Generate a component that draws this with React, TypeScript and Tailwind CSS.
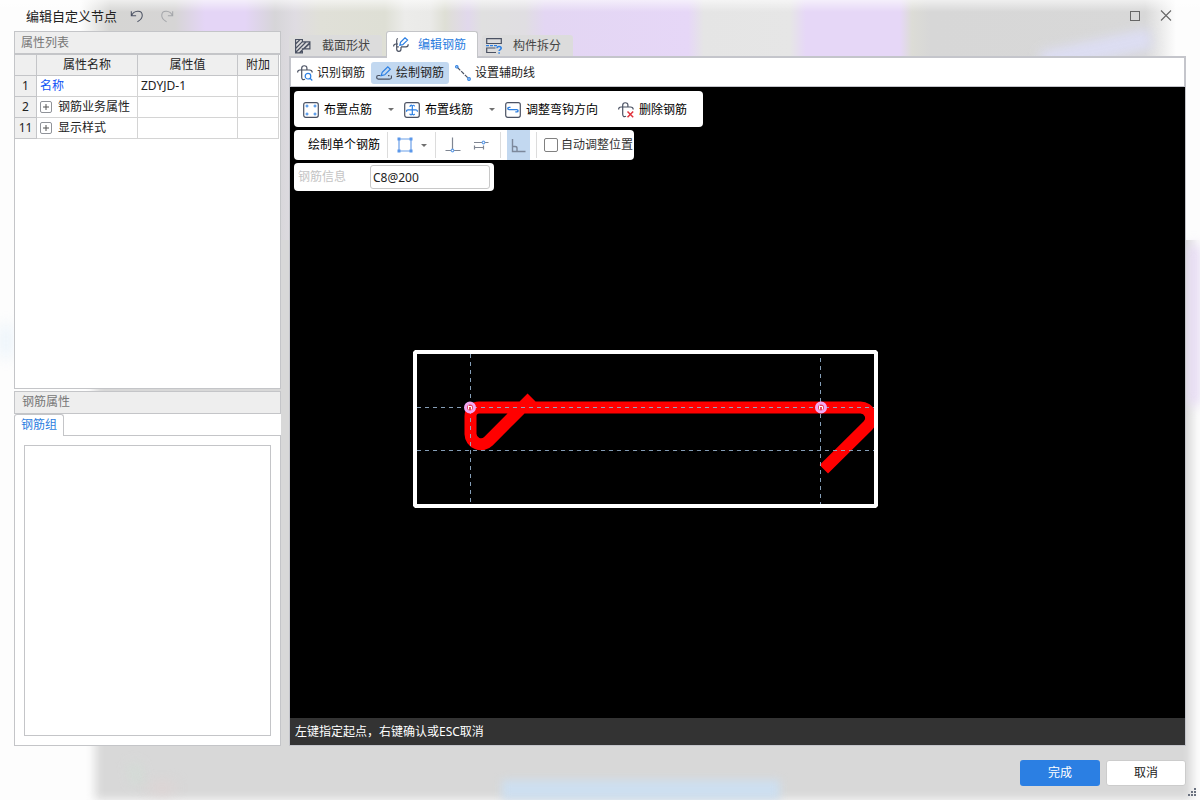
import React, { useState } from "react";

type IconProps = { children: React.ReactNode; className?: string };

function Icon({ children, className = "size-4" }: IconProps) {
  return (
    <svg
      viewBox="0 0 16 16"
      fill="none"
      stroke="#4b5263"
      strokeWidth="1.2"
      aria-hidden="true"
      className={`${className} shrink-0`}
    >
      {children}
    </svg>
  );
}

const BLUE = "#2b7fe3";

const UndoIcon = () => (
  <Icon className="size-[14px]">
    <path d="M1.500 2.500v5.200h5.500M1.800 7.500C4.500 1.500 13.500 0.800 14 7c0.200 3.500-2.500 6-5.500 7.500" />
  </Icon>
);

const RedoIcon = () => (
  <Icon className="size-[14px]">
    <path
      stroke="#a4a6aa"
      d="M14.500 2.500v5.200H9M14.200 7.500C11.500 1.500 2.500 0.800 2 7c-0.200 3.500 2.500 6 5.500 7.500"
    />
  </Icon>
);

const SectionIcon = () => (
  <Icon>
    <path d="M.6 1.500h6.800v2.300h7.500v7H7.400v4H.6zM.6 6l4.500-4.500M.6 10.500l6.800-6.800M.6 14.500L11 4M4.500 14.700L15 4.500M9 10.800l6-5.500" />
  </Icon>
);

const EditBarIcon = () => (
  <Icon>
    <path d="M.6 9.500C.6 7.800 1.400 7 3 7h2M5 1.500C3.700 1.500 3.700 2.500 3.700 3.500V12c0 3.200 4.300 3.200 4.300 0V10M8 9.800h5c1.500 0 2.200-.8 2.200-2.600M5.800 9.800H4" />
    <path stroke={BLUE} d="M6.800 8.300l.7-3L12 .8l2.500 2.300L9.800 7.600z" />
  </Icon>
);

const SplitIcon = () => (
  <Icon>
    <path d="M.7.700h14.600v4.800H.7zM10 14.500H.7V10h8.800" />
    <path stroke={BLUE} strokeDasharray="3 1" d="M0 7.600h11" />
    <path
      stroke={BLUE}
      strokeWidth="1.500"
      d="M11 10.200c0-2.400 4.200-2.400 4.200 0 0 1.400-2.100 1.400-2.100 2.900M13.100 14.200v1.500"
    />
  </Icon>
);

const BarPath = () => (
  <path d="M.6 7.400C.6 5.700 1.400 5 3 5h9.500c1.800 0 2.700.8 2.700 2.400M4.700 12.300V3.200c0-3.200 5.200-3.200 5.200-.2V5M4.700 12.300c0 2.600 2 2.900 3.300 1.800" />
);

const IdentifyIcon = () => (
  <Icon>
    <BarPath />
    <circle cx="11" cy="11.200" r="2.800" stroke={BLUE} />
    <path stroke={BLUE} d="M13 13.300l2.300 2.200" />
  </Icon>
);

const DrawIcon = () => (
  <Icon>
    <path d="M4.500 10.500H2.300c-2.200 0-2.200 3.600 0 3.600h11c2 0 2.500-1 2-3.600M12 10.700h1.500" />
    <path stroke={BLUE} d="M5.200 10.700l1-3.500L11.800 1.800l2.500 2.400-5.600 5.600z" />
  </Icon>
);

const GuideIcon = () => (
  <Icon>
    <path strokeDasharray="4 1.200" d="M2.500 2.500l11 11" />
    <circle cx="1.800" cy="1.800" r="1.200" fill="#fff" stroke={BLUE} />
    <circle cx="14" cy="14" r="1.300" fill="#fff" stroke={BLUE} />
  </Icon>
);

const PointBarIcon = () => (
  <Icon>
    <rect x=".7" y=".7" width="14.600" height="14.600" rx="2" />
    <g stroke={BLUE} strokeWidth="1">
      <circle cx="4" cy="4" r="1" />
      <circle cx="12" cy="4" r="1" />
      <circle cx="4" cy="12" r="1" />
      <circle cx="12" cy="12" r="1" />
    </g>
  </Icon>
);

const LineBarIcon = () => (
  <Icon>
    <rect x=".7" y=".7" width="14.600" height="14.600" rx="2" />
    <path
      stroke={BLUE}
      d="M2.500 9.800c0-1.500.5-2 1.500-2h8c1 0 1.500.5 1.500 2M6 5c0-2.400 2.300-2.400 2.300-.3v6.800M8.300 11c0 2.400-2.300 2.400-2.500.6M8.300 5c0-2.200 2-2.200 2.300-.6M8.300 11.300c0 1.900 2 1.900 2.300.5"
    />
  </Icon>
);

const HookIcon = () => (
  <Icon>
    <rect x=".7" y=".7" width="14.600" height="14.600" rx="2" />
    <path
      stroke={BLUE}
      strokeWidth="1.400"
      d="M5.500 5.400H4c-1.600 0-1.600 2.200 0 2.200h7.800c1.700 0 1.700 2.300 0 2.300h-1.500"
    />
  </Icon>
);

const DeleteBarIcon = () => (
  <Icon>
    <BarPath />
    <path stroke="#e0323c" strokeWidth="1.500" d="M9.500 9.500l5.700 5.700M15.200 9.500l-5.700 5.700" />
  </Icon>
);

const RectIcon = () => (
  <Icon>
    <path stroke="#6b9fe8" d="M2 2h12v12H2z" />
    <path fill="#5b97ea" stroke="none" d="M.5.500h3v3h-3zM12.500.500h3v3h-3zM.5 12.500h3v3h-3zM12.500 12.500h3v3h-3z" />
  </Icon>
);

const PerpendicularIcon = () => (
  <Icon>
    <path stroke="#7f8591" d="M7.500.5v12M.5 13.500H6M9 13.500h6.500" />
    <circle cx="7.500" cy="13.500" r="1.300" stroke="#6ba4ea" />
  </Icon>
);

const OffsetIcon = () => (
  <Icon>
    <path stroke="#7f8591" d="M1 5.500h8M12 5.500h3.500M1.500 10.500h9M1.500 8.500v4M10.500 8.500v4" />
    <circle cx="10.500" cy="5.500" r="1.300" stroke="#6ba4ea" />
  </Icon>
);

const RightAngleIcon = () => (
  <Icon>
    <path stroke="#7c889b" strokeWidth="1.400" d="M1.500 2v12.500h13M1.500 9.500h2.500c1.200 0 2 .7 2 1.700v3.300" />
  </Icon>
);

const Caret = () => (
  <svg viewBox="0 0 6 3" aria-hidden="true" className="h-[3px] w-[6px]">
    <path d="M0 0h6L3 3z" fill="#707070" />
  </svg>
);

function Backdrop() {
  return (
    <div aria-hidden="true" className="absolute inset-0 -z-10 overflow-hidden bg-[#fdfdfd]">
      <div className="absolute inset-y-0 right-2 left-[95px] bg-[#d8d8d8] blur-[5px]" />
      <div className="absolute inset-x-0 top-0 h-60 bg-[linear-gradient(90deg,#fdfdfd_80px,#d5d5d3_110px,#d6d5d5_175px,#e4d5f6_205px,#e4d5f6_245px,#d6d5d8_275px,#dfdce2_295px,#e0e0d8_320px,#dedfd5_385px,#ececea_405px,#eaeae8_430px,#dedfd5_445px,#e1d8ec_468px,#e0e0e0_482px,#e0dee2_525px,#e3d6f3_545px,#e6d7f7_688px,#e5e5e5_704px,#e6e6e6_790px,#e6d7f7_806px,#e6d7f7_900px,#dcdcd6_912px,#d7d7d7_930px,#d8d8d8_1145px,#fdfdfd_1176px)]" />
      <div className="absolute top-10 right-12 h-5 w-28 -rotate-12 bg-[#dddef4] blur-[6px]" />
      <div className="absolute inset-x-0 top-0 h-3 bg-linear-to-b from-white/60 to-transparent" />
      <div className="absolute top-[245px] right-0 h-40 w-3 bg-[#e6d9f5] blur-[6px]" />
      <div className="absolute top-[325px] left-0 h-8 w-3 bg-[#e9f3fb] blur-[7px]" />
      <div className="absolute bottom-0 left-[502px] h-5 w-[278px] bg-[#cddff0] blur-[4px]" />
      <div className="absolute bottom-4 left-[130px] h-5 w-3 -rotate-12 bg-[#d3dcd6] blur-[6px]" />
      <div className="absolute bottom-2 left-[150px] h-2 w-6 bg-[#e2d2d2] blur-[7px]" />
    </div>
  );
}

function TitleBar() {
  return (
    <header className="flex h-[31px] items-center pr-[26px] pl-[26px]">
      <h1 className="text-[13px] leading-5 text-[#222]">编辑自定义节点</h1>
      <button aria-label="撤销" className="ml-3 p-px">
        <UndoIcon />
      </button>
      <button aria-label="重做" className="ml-[14px] p-px">
        <RedoIcon />
      </button>
      <div className="ml-auto flex items-center gap-[15px]">
        <button aria-label="最大化" className="size-4 p-[3px]">
          <span className="block size-[10px] border border-[#666]" />
        </button>
        <button aria-label="关闭" className="size-4">
          <Icon>
            <path stroke="#666" d="M3 2.500l10 10M13 2.500L3 12.500" strokeWidth="1.100" />
          </Icon>
        </button>
      </div>
    </header>
  );
}

type Row = { id: number; name: string; value: string; group: boolean };

const rows: Row[] = [
  { id: 1, name: "名称", value: "ZDYJD-1", group: false },
  { id: 2, name: "钢筋业务属性", value: "", group: true },
  { id: 11, name: "显示样式", value: "", group: true },
];

function PropertyTable() {
  return (
    <table className="w-[264px] table-fixed border-separate border-spacing-0 text-[#222]">
      <colgroup>
        <col className="w-[22px]" />
        <col className="w-[101px]" />
        <col className="w-[100px]" />
        <col className="w-[41px]" />
      </colgroup>
      <thead>
        <tr className="h-[21px] bg-[#efefef]">
          <th className="border-r border-b border-[#c4c5c8] p-0" />
          {["属性名称", "属性值", "附加"].map((h) => (
            <th key={h} scope="col" className="border-r border-b border-[#c4c5c8] p-0 font-normal">
              {h}
            </th>
          ))}
        </tr>
      </thead>
      <tbody>
        {rows.map((r) => (
          <tr key={r.id} className="h-[21px]">
            <th scope="row" className="border-r border-b border-[#c4c5c8] bg-[#efefef] p-0 font-normal">
              {r.id}
            </th>
            <td className="border-r border-b border-[#d4d4d4] p-0 pl-[3px]">
              {r.group ? (
                <div className="flex items-center gap-[6px]">
                  <button
                    aria-label={`展开${r.name}`}
                    className="flex size-3 items-center justify-center rounded-[2px] border border-[#909399]"
                  >
                    <svg viewBox="0 0 6 6" aria-hidden="true" className="size-[6px]">
                      <path d="M3 0v6M0 3h6" stroke="#555" />
                    </svg>
                  </button>
                  {r.name}
                </div>
              ) : (
                <span className="text-[#0f53f5]">{r.name}</span>
              )}
            </td>
            <td className="border-r border-b border-[#d4d4d4] p-0 pl-[3px]">{r.value}</td>
            <td className="border-r border-b border-[#d4d4d4] p-0" />
          </tr>
        ))}
      </tbody>
    </table>
  );
}

function SidePanels() {
  return (
    <aside className="flex w-[267px] shrink-0 flex-col gap-[2px]">
      <section className="flex flex-1 flex-col border border-[#c4c5c8] bg-white">
        <h2 className="flex h-[23px] items-center border-b-2 border-[#c4c5c8] bg-[#eee] pt-px pl-[6px] text-[#777]">
          属性列表
        </h2>
        <PropertyTable />
      </section>
      <section className="flex flex-1 flex-col bg-white">
        <h2 className="flex h-[23px] items-center border border-[#c4c5c8] bg-[#eee] pl-[7px] text-[#777]">
          钢筋属性
        </h2>
        <div className="flex h-[22px]">
          <button className="w-[50px] rounded-t-[3px] border-x border-t border-[#c4c5c8] text-[#2b7de0]">
            钢筋组
          </button>
          <div className="flex-1 border-b border-[#c4c5c8]" />
        </div>
        <div className="flex flex-1 border-x border-b border-[#c4c5c8] p-[9px]">
          <div className="flex-1 border border-[#c4c5c8]" />
        </div>
      </section>
    </aside>
  );
}

function Node({ x, y }: { x: number; y: number }) {
  return (
    <g>
      <circle cx={x} cy={y} r="4.500" fill="#e8455a" stroke="#f2a8f2" strokeWidth="3" />
      <path d={`M${x - 1.500} ${y + 2}v-4M${x - 1.500} ${y - 1}h3v3`} stroke="#fff" fill="none" />
    </g>
  );
}

function Drawing() {
  return (
    <svg role="img" aria-label="钢筋截面" className="absolute inset-0 size-full">
      <path
        d="M241.800 310.800L198.400 354.200A10.500 10.500 0 0 1 180.500 347V329A8.500 8.500 0 0 1 189 320.500H570.500A10.500 10.500 0 0 1 578 338.400L533.800 382.200"
        fill="none"
        stroke="#f00"
        strokeWidth="12"
      />
      <g stroke="#94afcb" strokeDasharray="4 4" strokeOpacity="0.9">
        <path d="M127 320.500H585M127 363.500H585" />
        <path d="M180.500 267V415M530.500 271V417" />
      </g>
      <rect x="125" y="265" width="461" height="154" fill="none" stroke="#fff" strokeWidth="4" strokeLinejoin="bevel" />
      <Node x={180} y={320.500} />
      <Node x={531} y={320.500} />
    </svg>
  );
}

const Divider = () => <span className="my-[2px] w-px self-stretch bg-[#dcdcdc]" />;

function CanvasTools() {
  const [auto, setAuto] = useState(false);
  const [info, setInfo] = useState("C8@200");
  return (
    <div className="relative flex flex-col items-start gap-[3px] pt-1 pl-1 text-black">
      <div className="flex h-9 items-center rounded-[4px] bg-white pt-px pr-4 pl-[9px]">
        <button className="flex items-center gap-[5px]">
          <PointBarIcon />
          布置点筋
        </button>
        <button aria-label="布置点筋选项" className="ml-4 flex h-5 w-4 items-center">
          <Caret />
        </button>
        <button className="flex items-center gap-[5px]">
          <LineBarIcon />
          布置线筋
        </button>
        <button aria-label="布置线筋选项" className="ml-4 flex h-5 w-4 items-center">
          <Caret />
        </button>
        <button className="flex items-center gap-[5px]">
          <HookIcon />
          调整弯钩方向
        </button>
        <button className="ml-5 flex items-center gap-[5px]">
          <DeleteBarIcon />
          删除钢筋
        </button>
      </div>
      <div className="flex h-[30px] items-center rounded-[4px] bg-white pl-[14px]">
        <span className="mr-[7px]">绘制单个钢筋</span>
        <Divider />
        <button aria-label="矩形" className="ml-[9px]">
          <RectIcon />
        </button>
        <button aria-label="形状选项" className="ml-2 flex h-5 w-[14px] items-center">
          <Caret />
        </button>
        <Divider />
        <button aria-label="垂直" className="ml-[9px]">
          <PerpendicularIcon />
        </button>
        <button aria-label="偏移" className="mr-[11px] ml-3">
          <OffsetIcon />
        </button>
        <Divider />
        <button
          aria-label="正交"
          aria-pressed="true"
          className="mx-[6px] flex w-[23px] items-center justify-center self-stretch bg-[#c2d8f0]"
        >
          <RightAngleIcon />
        </button>
        <Divider />
        <label className="ml-[7px] flex items-center gap-[3px] pr-px text-[#333]">
          <input
            type="checkbox"
            checked={auto}
            onChange={(e) => setAuto(e.target.checked)}
            className="size-[14px] appearance-none rounded-[2px] border border-[#808080] bg-white checked:bg-[#2b7de0]"
          />
          自动调整位置
        </label>
      </div>
      <div className="flex h-7 items-center rounded-[4px] bg-white pr-1 pl-1">
        <label htmlFor="bar-info" className="w-[72px] text-[#c4c4c4]">
          钢筋信息
        </label>
        <input
          id="bar-info"
          value={info}
          onChange={(e) => setInfo(e.target.value)}
          className="h-6 w-[120px] rounded-[3px] border border-[#c8c8c8] px-[2px] text-[#222] outline-none"
        />
      </div>
    </div>
  );
}

const inactiveTab =
  "flex h-[21px] items-center gap-[11px] rounded-t-[3px] bg-[#dcdcdc] text-[#444]";

const toolButton = "flex h-[22px] items-center gap-1 rounded-[3px] px-[5px]";

function Workspace() {
  return (
    <main className="flex min-w-0 flex-1 flex-col">
      <div className="flex h-[25px] items-end">
        <button className={`${inactiveTab} w-[93px] pl-[6px]`}>
          <SectionIcon />
          截面形状
        </button>
        <button className="relative z-10 mx-1 -mb-[2px] flex h-[27px] w-[92px] items-center gap-[9px] self-start rounded-t-[3px] border-x border-t border-[#c4c5c8] bg-white pl-[6px] text-[#2b7de0]">
          <EditBarIcon />
          编辑钢筋
        </button>
        <button className={`${inactiveTab} w-[91px] pl-1`}>
          <SplitIcon />
          构件拆分
        </button>
      </div>
      <div className="flex flex-1 flex-col border-x border-t-2 border-b border-[#c4c5cb]">
        <div className="flex h-[29px] items-center gap-px border-x border-b border-[#c4c5cb] bg-white pt-px pl-px text-[#222]">
          <button className={toolButton}>
            <IdentifyIcon />
            识别钢筋
          </button>
          <button aria-pressed="true" className={`${toolButton} bg-[#c2d8f0]`}>
            <DrawIcon />
            绘制钢筋
          </button>
          <button className={toolButton}>
            <GuideIcon />
            设置辅助线
          </button>
        </div>
        <div className="relative flex-1 bg-black">
          <Drawing />
          <CanvasTools />
        </div>
        <div className="flex h-[27px] items-center bg-[#333] pt-px pl-[5px] text-white">
          左键指定起点，右键确认或ESC取消
        </div>
      </div>
    </main>
  );
}

export default function App() {
  return (
    <div className="relative isolate flex min-h-screen flex-col font-['Noto_Sans','Noto_Sans_CJK_SC',sans-serif] text-[12px] leading-[18px]">
      <Backdrop />
      <TitleBar />
      <div className="flex flex-1 gap-2 pr-[14px] pl-[14px]">
        <SidePanels />
        <Workspace />
      </div>
      <footer className="flex h-[54px] items-start justify-end gap-[6px] pt-[14px] pr-[14px]">
        <button className="h-[26px] w-20 rounded-[3px] bg-[#2b7fe3] text-white">完成</button>
        <button className="h-[26px] w-20 rounded-[3px] border border-[#ccc] bg-white text-[#222]">取消</button>
      </footer>
      <svg viewBox="0 0 8 8" aria-hidden="true" className="absolute right-1 bottom-1 size-2">
        <path fill="#6b7280" d="M6 0h2v2H6zM3 3h2v2H3zM6 3h2v2H6zM0 6h2v2H0zM3 6h2v2H3zM6 6h2v2H6z" />
      </svg>
    </div>
  );
}
